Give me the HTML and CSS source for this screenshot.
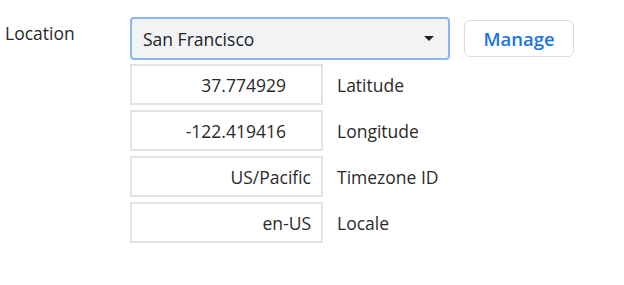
FILE: index.html
```html
<!DOCTYPE html>
<html lang="en">
<head>
    <meta charset="UTF-8">
    <title>Location Settings</title>
    <link rel="stylesheet" href="styles.css">
</head>
<body>
    <div class="setting-row">
        <div class="setting-label">Location</div>
        <div class="setting-body">
            <div class="top-line">
                <div class="location-select">
                    <span>San Francisco</span>
                    <svg class="caret" width="10" height="5" viewBox="0 0 10 5"><path d="M0 0 L10 0 L5 5 Z" fill="#202124"/></svg>
                </div>
                <button class="manage-button">Manage</button>
            </div>
            <div class="field-list">
                <div class="field">
                    <input class="field-input num" type="text" value="37.774929">
                    <span class="field-name">Latitude</span>
                </div>
                <div class="field">
                    <input class="field-input num" type="text" value="-122.419416">
                    <span class="field-name">Longitude</span>
                </div>
                <div class="field">
                    <input class="field-input" type="text" value="US/Pacific">
                    <span class="field-name">Timezone ID</span>
                </div>
                <div class="field">
                    <input class="field-input" type="text" value="en-US">
                    <span class="field-name">Locale</span>
                </div>
            </div>
        </div>
    </div>
</body>
</html>
```

FILE: styles.css
```css
body {
    margin: 0;
    font-family: "Open Sans", "Noto Sans", sans-serif;
    font-size: 17.5px;
    color: #2a2a2a;
    background: #fff;
}
.setting-row {
    display: flex;
    padding: 17px 0 0 5px;
}
.setting-label {
    width: 125px;
    padding-top: 4px;
}
.setting-body {
    display: flex;
    flex-direction: column;
}
.top-line {
    display: flex;
    align-items: center;
    gap: 14px;
}
.location-select {
    width: 320px;
    height: 43px;
    box-sizing: border-box;
    border: 2px solid #8ab4f8;
    border-radius: 4px;
    background: #f1f3f4;
    display: flex;
    align-items: center;
    justify-content: space-between;
    padding: 0 11px;
    color: #202124;
}
.caret {
    margin-right: 3px;
}
.manage-button {
    width: 110px;
    height: 37px;
    border: 1px solid #dadce0;
    border-radius: 6px;
    background: #fff;
    color: #1a73e8;
    font-family: inherit;
    font-size: 18.5px;
    font-weight: 600;
}
.field-list {
    display: flex;
    flex-direction: column;
    gap: 5px;
    margin-top: 4px;
}
.field {
    display: flex;
    align-items: center;
    gap: 14px;
}
.field-input {
    width: 193px;
    height: 41px;
    box-sizing: border-box;
    border: 2px solid #e3e3e3;
    padding: 0 10px;
    font-family: inherit;
    font-size: 17.5px;
    color: #2a2a2a;
    text-align: right;
    outline: none;
}
.field-input.num {
    padding-right: 35px;
}
```
